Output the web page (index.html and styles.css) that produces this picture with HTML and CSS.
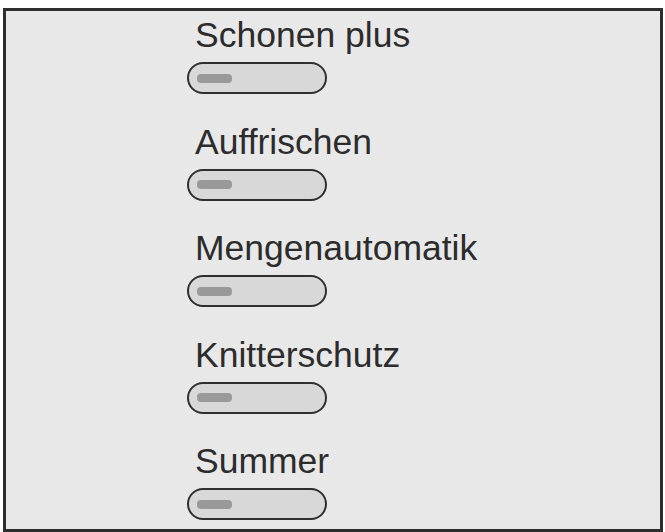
FILE: index.html
```html
<!DOCTYPE html>
<html lang="de">
<head>
    <meta charset="UTF-8">
    <meta name="viewport" content="width=device-width, initial-scale=1.0">
    <title>Optionen</title>
    <link rel="stylesheet" href="styles.css">
</head>
<body>
    <div class="panel">
        <!-- Option list, each with its switch -->
        <div class="option">
            <div class="label">Schonen plus</div>
            <div class="switch"><span class="knob"></span></div>
        </div>
        <div class="option">
            <div class="label">Auffrischen</div>
            <div class="switch"><span class="knob"></span></div>
        </div>
        <div class="option">
            <div class="label">Mengenautomatik</div>
            <div class="switch"><span class="knob"></span></div>
        </div>
        <div class="option">
            <div class="label">Knitterschutz</div>
            <div class="switch"><span class="knob"></span></div>
        </div>
        <div class="option">
            <div class="label">Summer</div>
            <div class="switch"><span class="knob"></span></div>
        </div>
    </div>
</body>
</html>
```

FILE: styles.css
```css
/* Panel with the option switches */
body {
    margin: 0;
    padding: 8px 2px 0 3px;
    background-color: #fff;
    font-family: "Liberation Sans", Arial, sans-serif;
}

.panel {
    box-sizing: border-box;
    height: 524px;
    border: 3px solid #2e2e2e;
    background-color: #e8e8e8;
    padding: 4px 0 0 181px;
    display: flex;
    flex-direction: column;
    gap: 27.5px;
}

.option {
    display: flex;
    flex-direction: column;
    align-items: flex-start;
    gap: 7px;
}

.label {
    font-size: 35.5px;
    line-height: 40px;
    color: #2c2c2c;
    margin-left: 8px;
}

/* Switch in its "off" state */
.switch {
    box-sizing: border-box;
    width: 140px;
    height: 32px;
    border: 2px solid #2f2f2f;
    border-radius: 16px;
    background-color: #d8d8d8;
    display: flex;
    align-items: center;
    padding-left: 8px;
}

.knob {
    width: 35px;
    height: 9px;
    border-radius: 4px;
    background-color: #999;
}
```
